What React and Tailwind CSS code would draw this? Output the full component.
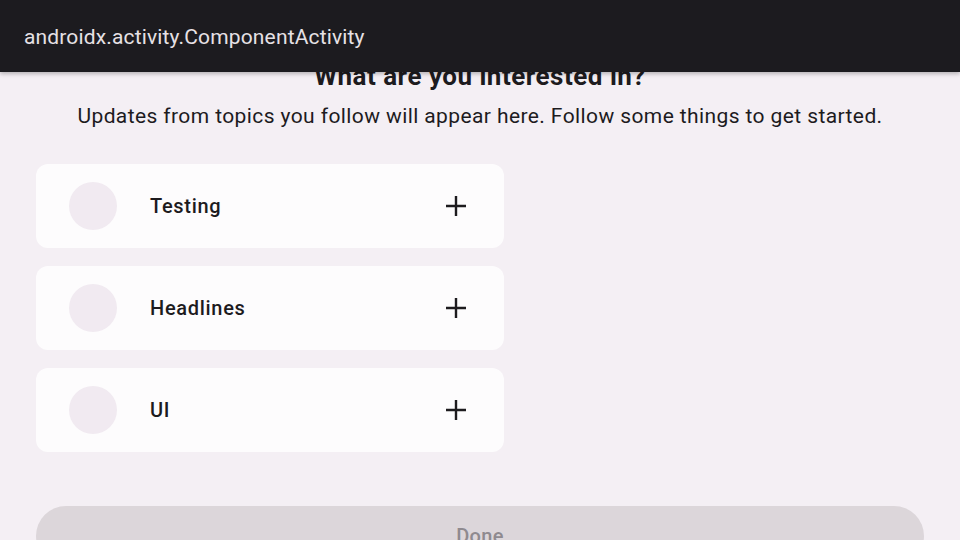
const topics = ['Testing', 'Headlines', 'UI']

function PlusIcon() {
  return (
    <svg width="22" height="22" viewBox="0 0 22 22" className="text-[#1d1b1e]">
      <path d="M11 1v20M1 11h20" stroke="currentColor" strokeWidth="2.4" fill="none" />
    </svg>
  )
}

export default function App() {
  return (
    <div className="relative h-[540px] w-[960px] overflow-hidden bg-[#f4eff4] font-['Roboto',sans-serif]">
      <div className="absolute inset-x-0 top-0 z-10 flex h-[72px] items-center bg-[#1c1b1f] px-6 shadow-[0_2px_4px_rgba(0,0,0,0.25)]">
        <span className="mt-1 text-[21px] tracking-[0.15px] text-[#e6e1e5]">androidx.activity.ComponentActivity</span>
      </div>

      <div className="flex flex-col pt-[60px]">
        <h1 className="text-center text-[26px] font-bold leading-[32px] tracking-[0.5px] text-[#1d1b1e]">
          What are you interested in?
        </h1>
        <p className="mt-[10px] text-center text-[21px] leading-[28px] tracking-[0.4px] text-[#1d1b1e]">
          Updates from topics you follow will appear here. Follow some things to get started.
        </p>

        <div className="mt-[34px] ml-9 flex w-[468px] flex-col gap-[18px]">
          {topics.map((t) => (
            <div key={t} className="flex h-[84px] items-center rounded-xl bg-[#fdfcfd] pl-[33px] pr-[37px]">
              <div className="h-12 w-12 rounded-full bg-[#f1eaf1]" />
              <span className="ml-[33px] flex-1 text-[20px] font-medium tracking-[0.7px] text-[#1d1b1e]">{t}</span>
              <PlusIcon />
            </div>
          ))}
        </div>

        <button className="mx-9 mt-[54px] h-[60px] shrink-0 rounded-full bg-[#dcd6da] text-[20px] font-medium tracking-[0.3px] text-[#8f8a8f]">
          Done
        </button>
      </div>
    </div>
  )
}
